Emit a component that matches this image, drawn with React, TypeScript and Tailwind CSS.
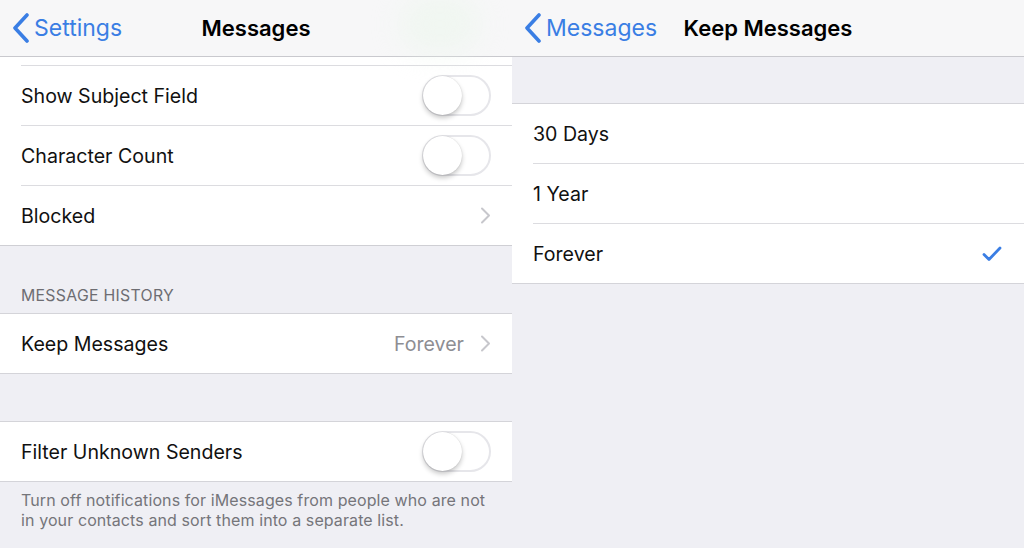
import React from "react";

const font = { fontFamily: "Inter, 'Liberation Sans', sans-serif" };

function BackChevron() {
  return (
    <svg width="20" height="30" viewBox="0 0 20 30" className="shrink-0">
      <path d="M16 2 L4 15 L16 28" fill="none" stroke="#3a7ee4" strokeWidth="3.6" strokeLinecap="round" strokeLinejoin="round" />
    </svg>
  );
}

function Chevron() {
  return (
    <svg width="11" height="17" viewBox="0 0 11 17" className="shrink-0">
      <path d="M2 1.5 L9 8.5 L2 15.5" fill="none" stroke="#c7c7cc" strokeWidth="2" strokeLinecap="round" strokeLinejoin="round" />
    </svg>
  );
}

function Check() {
  return (
    <svg width="20" height="16" viewBox="0 0 20 16" className="shrink-0">
      <path d="M2 8.5 L7 13.5 L18 2" fill="none" stroke="#3a7ee4" strokeWidth="2.8" strokeLinecap="round" strokeLinejoin="round" />
    </svg>
  );
}

function Toggle() {
  return (
    <div className="relative h-[41px] w-[69px] rounded-full border-2 border-[#e6e6ea] bg-white">
      <div className="absolute -left-[1px] -top-[1px] h-[39px] w-[39px] rounded-full bg-white shadow-[0_3px_5px_rgba(0,0,0,0.22),0_0_1px_rgba(0,0,0,0.2)]" />
    </div>
  );
}

function NavBar({ back, title }: { back: string; title: string }) {
  return (
    <div className="relative flex h-[57px] items-center border-b border-[#c9c9ce] bg-[#f7f7f8]">
      <div className="flex items-center gap-[3px] pl-[11px]">
        <BackChevron />
        <span className="text-[23px] text-[#3a7ee4]">{back}</span>
      </div>
      <div className="absolute inset-x-0 top-0 flex h-[56px] items-center justify-center pointer-events-none">
        <span className="text-[22px] font-semibold text-black">{title}</span>
      </div>
    </div>
  );
}

const label = "pt-[3px] text-[19.6px] text-[#111]";

function LeftPanel() {
  return (
    <div className="relative flex h-[548px] w-[512px] flex-col overflow-hidden bg-[#efeff4]">
      <NavBar back="Settings" title="Messages" />
      <div className="pointer-events-none absolute left-[400px] top-[-6px] h-[60px] w-[80px] rounded-full bg-[#eaf6ea] opacity-50 blur-[14px]" />
      <div className="bg-white">
        <div className="ml-[21px] h-[9px] border-b border-[#dcdce0]" />
        <div className="flex h-[60px] items-center justify-between pr-[21px] ml-[21px] border-b border-[#dcdce0]">
          <span className={label}>Show Subject Field</span>
          <Toggle />
        </div>
        <div className="flex h-[60px] items-center justify-between pr-[21px] ml-[21px] border-b border-[#dcdce0]">
          <span className={label}>Character Count</span>
          <Toggle />
        </div>
        <div className="flex h-[60px] items-center justify-between pl-[21px] pr-[21px] border-b border-[#cfcfd4]">
          <span className={label}>Blocked</span>
          <Chevron />
        </div>
      </div>
      <div className="flex h-[68px] items-end pb-[5px] pl-[21px] border-b border-[#d4d4d9]">
        <span className="text-[15.8px] tracking-[0.3px] text-[#6d6d72]">MESSAGE HISTORY</span>
      </div>
      <div className="flex h-[60px] items-center justify-between bg-white pl-[21px] pr-[21px] border-b border-[#d4d4d9]">
        <span className={label}>Keep Messages</span>
        <div className="flex items-center gap-[16px]">
          <span className="pt-[3px] text-[19.6px] text-[#8e8e93]">Forever</span>
          <Chevron />
        </div>
      </div>
      <div className="h-[48px] border-b border-[#d4d4d9]" />
      <div className="flex h-[60px] items-center justify-between bg-white pl-[21px] pr-[21px] border-b border-[#d4d4d9]">
        <span className={label}>Filter Unknown Senders</span>
        <Toggle />
      </div>
      <p className="pl-[21px] pr-[18px] pt-[8px] text-[16px] tracking-[0.1px] leading-[20px] text-[#75757a]">
        Turn off notifications for iMessages from people who are not in your contacts and sort them into a separate list.
      </p>
    </div>
  );
}

function RightPanel() {
  const items = ["30 Days", "1 Year", "Forever"];
  return (
    <div className="flex h-[548px] w-[512px] flex-col bg-[#efeff4]">
      <NavBar back="Messages" title="Keep Messages" />
      <div className="h-[47px] border-b border-[#d4d4d9]" />
      <div className="bg-white">
        {items.map((it, i) => {
          const last = i === items.length - 1;
          return (
            <div key={it} className={last ? "" : "ml-[21px]"}>
              <div
                className={`flex h-[60px] items-center justify-between pr-[22px] border-b ${last ? "pl-[21px] border-[#d4d4d9]" : "border-[#dcdce0]"}`}
              >
                <span className={label}>{it}</span>
                {last && <Check />}
              </div>
            </div>
          );
        })}
      </div>
    </div>
  );
}

export default function App() {
  return (
    <div className="flex h-[548px] w-[1024px] overflow-hidden" style={font}>
      <LeftPanel />
      <RightPanel />
    </div>
  );
}
